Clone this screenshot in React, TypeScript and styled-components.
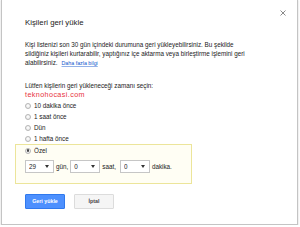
import React from "react";
import styled, { createGlobalStyle } from "styled-components";

const GlobalStyle = createGlobalStyle`
  html, body { margin: 0; padding: 0; background: #ffffff; }
  body { font-family: "Liberation Sans", Arial, sans-serif; color: #222222; }
  * { box-sizing: border-box; }
`;

const Dialog = styled.div`
  position: relative;
  width: 297px;
  height: 226px;
  margin: -1px 0 0 1px;
  border: 1px solid #c4c4c4;
  box-shadow: 0 1px 2px rgba(0, 0, 0, 0.18);
  background: #ffffff;
  padding: 18px 10px 0 23px;
  display: flex;
  flex-direction: column;
`;

const Header = styled.div`
  display: flex;
  justify-content: space-between;
  align-items: flex-start;
`;

const Title = styled.div`
  font-size: 7.8px;
  line-height: 10px;
  color: #222222;
`;

const Close = styled.button`
  border: 0;
  background: none;
  padding: 0;
  margin: -8px 1px 0 0;
  width: 6px;
  height: 6px;
  display: flex;
  cursor: pointer;
`;

const Body = styled.p`
  margin: 12px 0 0 0;
  font-size: 6.3px;
  line-height: 9px;
  color: #222222;
`;

const Link = styled.a`
  margin-left: 4px;
  font-size: 5.3px;
  color: #1155cc;
  text-decoration: underline;
  text-decoration-color: rgba(17, 85, 204, 0.45);
`;

const Prompt = styled.div`
  margin-top: 13px;
  font-size: 6.3px;
  line-height: 9px;
`;

const Watermark = styled.div`
  font-size: 7.2px;
  line-height: 10px;
  color: #e8323c;
  letter-spacing: 0.4px;
  margin-top: 0;
  height: 10px;
`;

const Options = styled.div`
  display: flex;
  flex-direction: column;
`;

const Option = styled.label`
  display: flex;
  align-items: center;
  gap: 3px;
  height: 11px;
  font-size: 6.3px;
  color: #222222;
`;

const Radio = styled.span<{ $checked?: boolean }>`
  width: 6px;
  height: 6px;
  border-radius: 50%;
  border: 1px solid #b5b5b5;
  background: radial-gradient(circle at 50% 40%, #ffffff 0%, #e4e4e4 100%);
  display: flex;
  align-items: center;
  justify-content: center;
  &::after {
    content: "";
    width: 2.5px;
    height: 2.5px;
    border-radius: 50%;
    background: ${(p) => (p.$checked ? "#444444" : "transparent")};
  }
`;

const CustomBox = styled.div`
  margin-left: -10px;
  width: 177px;
  border: 1px solid #ece59a;
  background: #fffef4;
  padding: 0 9px 9.5px 9px;
`;

const SelectRow = styled.div`
  display: flex;
  align-items: center;
  margin-top: 4px;
  font-size: 6.3px;
  color: #222222;
`;

const SelectWrap = styled.div<{ $w: number }>`
  position: relative;
  width: ${(p) => p.$w}px;
  height: 13px;
`;

const Select = styled.select`
  appearance: none;
  -webkit-appearance: none;
  width: 100%;
  height: 100%;
  border: 1px solid #c6c6c6;
  border-radius: 0;
  background: #ffffff;
  font-family: "Liberation Sans", Arial, sans-serif;
  font-size: 6.3px;
  color: #222222;
  padding: 0 0 0 3px;
  margin: 0;
  outline: none;
`;

const Arrow = styled.svg`
  position: absolute;
  right: 5px;
  top: 5px;
  pointer-events: none;
`;

const Unit = styled.span<{ $mr: number }>`
  margin: 0 ${(p) => p.$mr}px 0 2px;
`;

const Buttons = styled.div`
  display: flex;
  gap: 9px;
  margin-top: 10px;
`;

const Button = styled.button<{ $primary?: boolean }>`
  width: 40px;
  height: 15px;
  padding: 0;
  border-radius: 1px;
  font-family: "Liberation Sans", Arial, sans-serif;
  font-size: 5.3px;
  font-weight: bold;
  cursor: pointer;
  border: 1px solid ${(p) => (p.$primary ? "#3079ed" : "#dcdcdc")};
  background: ${(p) => (p.$primary ? "#4d90fe" : "#f5f5f5")};
  color: ${(p) => (p.$primary ? "#ffffff" : "#444444")};
`;

function Dropdown({ value, width }: { value: string; width: number }) {
  return (
    <SelectWrap $w={width}>
      <Select defaultValue={value}>
        <option value={value}>{value}</option>
      </Select>
      <Arrow width="4" height="3" viewBox="0 0 4 3">
        <path d="M0 0 L4 0 L2 3 Z" fill="#333333" />
      </Arrow>
    </SelectWrap>
  );
}

const options = ["10 dakika önce", "1 saat önce", "Dün", "1 hafta önce"];

export default function App() {
  return (
    <>
      <GlobalStyle />
      <Dialog>
        <Header>
          <Title>Kişileri geri yükle</Title>
          <Close aria-label="Kapat">
            <svg width="6" height="6" viewBox="0 0 6 6">
              <path d="M0.5 0.5 L5.5 5.5 M5.5 0.5 L0.5 5.5" stroke="#8a8a8a" strokeWidth="1" />
            </svg>
          </Close>
        </Header>
        <Body>
          Kişi listenizi son 30 gün içindeki durumuna geri yükleyebilirsiniz. Bu şekilde
          <br />
          sildiğiniz kişileri kurtarabilir, yaptığınız içe aktarma veya birleştirme işlemini geri
          <br />
          alabilirsiniz.
          <Link href="#">Daha fazla bilgi</Link>
        </Body>
        <Prompt>Lütfen kişilerin geri yükleneceği zamanı seçin:</Prompt>
        <Watermark>teknohocasi.com</Watermark>
        <Options>
          {options.map((o) => (
            <Option key={o}>
              <Radio />
              {o}
            </Option>
          ))}
        </Options>
        <CustomBox>
          <Option>
            <Radio $checked />
            Özel
          </Option>
          <SelectRow>
            <Dropdown value="29" width={29} />
            <Unit $mr={2}>gün,</Unit>
            <Dropdown value="0" width={30} />
            <Unit $mr={4}>saat,</Unit>
            <Dropdown value="0" width={30} />
            <Unit $mr={0}>dakika.</Unit>
          </SelectRow>
        </CustomBox>
        <Buttons>
          <Button $primary>Geri yükle</Button>
          <Button>İptal</Button>
        </Buttons>
      </Dialog>
    </>
  );
}
